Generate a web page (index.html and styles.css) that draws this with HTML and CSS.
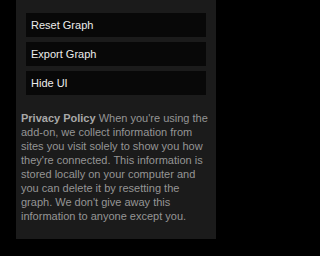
FILE: index.html
```
<!DOCTYPE html>
<html>
<head>
<meta charset="utf-8">
<link rel="stylesheet" href="styles.css">
</head>
<body>
<div class="panel">
  <div class="buttons">
    <div class="btn">Reset Graph</div>
    <div class="btn">Export Graph</div>
    <div class="btn">Hide UI</div>
  </div>
  <p class="policy"><b>Privacy Policy</b> When you're using the add-on, we collect information from sites you visit solely to show you how they're connected. This information is stored locally on your computer and you can delete it by resetting the graph. We don't give away this information to anyone except you.</p>
</div>
</body>
</html>
```
FILE: styles.css
```
html, body {
  margin: 0;
  padding: 0;
  background: #000;
  width: 232px;
  height: 256px;
  overflow: hidden;
}
.panel {
  margin-left: 16px;
  width: 200px;
  background: #1b1b1b;
  padding: 13px 0 16px;
  box-sizing: border-box;
  height: 239px;
  font-family: "Liberation Sans", Arial, sans-serif;
}
.buttons {
  display: flex;
  flex-direction: column;
  gap: 5px;
  margin: 0 10px;
}
.btn {
  height: 24px;
  line-height: 24px;
  background: #080808;
  color: #ececec;
  font-size: 11px;
  padding-left: 5px;
}
.policy {
  margin: 16px 4px 0 5px;
  font-size: 11px;
  line-height: 14px;
  color: #959595;
}
.policy b {
  color: #a8a8a8;
}
```
